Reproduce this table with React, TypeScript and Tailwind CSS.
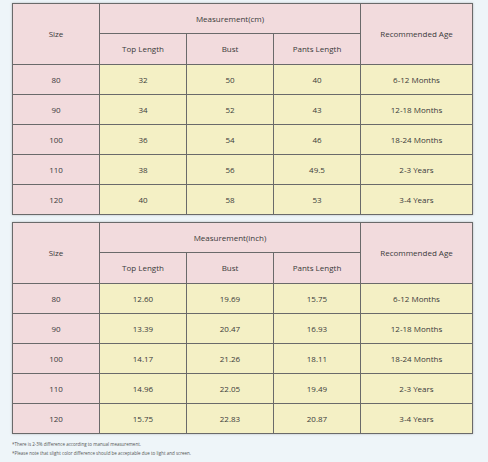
import React from "react";

const pink = "bg-[#f2dbdd]";
const yellow = "bg-[#f4f0c5]";

type Row = [string, string, string, string, string];

const cm: Row[] = [
  ["80", "32", "50", "40", "6-12 Months"],
  ["90", "34", "52", "43", "12-18 Months"],
  ["100", "36", "54", "46", "18-24 Months"],
  ["110", "38", "56", "49.5", "2-3 Years"],
  ["120", "40", "58", "53", "3-4 Years"],
];

const inch: Row[] = [
  ["80", "12.60", "19.69", "15.75", "6-12 Months"],
  ["90", "13.39", "20.47", "16.93", "12-18 Months"],
  ["100", "14.17", "21.26", "18.11", "18-24 Months"],
  ["110", "14.96", "22.05", "19.49", "2-3 Years"],
  ["120", "15.75", "22.83", "20.87", "3-4 Years"],
];

function Table({ unit, rows }: { unit: string; rows: Row[] }) {
  return (
    <div
      className="grid w-[461px] gap-px border border-[#6a6a6a] bg-[#6a6a6a] shadow-[0_0_2px_rgba(120,120,120,0.5)] text-[8px] text-[#3a3a3a]"
      style={{
        gridTemplateColumns: "86px 86px 86px 86px 111px",
        gridTemplateRows: "29px 30px repeat(5, 29px)",
      }}
    >
      <div className={`${pink} row-span-2 flex items-center justify-center`}>Size</div>
      <div className={`${pink} col-span-3 flex items-center justify-center`}>Measurement({unit})</div>
      <div className={`${pink} row-span-2 flex items-center justify-center`}>Recommended Age</div>
      <div className={`${pink} flex items-center justify-center`}>Top Length</div>
      <div className={`${pink} flex items-center justify-center`}>Bust</div>
      <div className={`${pink} flex items-center justify-center`}>Pants Length</div>
      {rows.map((r) => (
        <React.Fragment key={r[0]}>
          <div className={`${pink} flex items-center justify-center`}>{r[0]}</div>
          <div className={`${yellow} flex items-center justify-center`}>{r[1]}</div>
          <div className={`${yellow} flex items-center justify-center`}>{r[2]}</div>
          <div className={`${yellow} flex items-center justify-center`}>{r[3]}</div>
          <div className={`${yellow} flex items-center justify-center`}>{r[4]}</div>
        </React.Fragment>
      ))}
    </div>
  );
}

export default function App() {
  return (
    <div
      className="w-[488px] h-[462px] bg-[#eef5f9] pl-[12px] pt-[3px] overflow-hidden"
      style={{ fontFamily: "'Open Sans', 'Noto Sans', sans-serif" }}
    >
      <div className="flex flex-col gap-[7px]">
        <Table unit="cm" rows={cm} />
        <Table unit="inch" rows={inch} />
      </div>
      <div className="mt-[7px] flex flex-col gap-[3px] text-[4.5px] leading-[6px] text-[#555]">
        <div>*There is 2-3% difference according to manual measurement.</div>
        <div>*Please note that slight color difference should be acceptable due to light and screen.</div>
      </div>
    </div>
  );
}
